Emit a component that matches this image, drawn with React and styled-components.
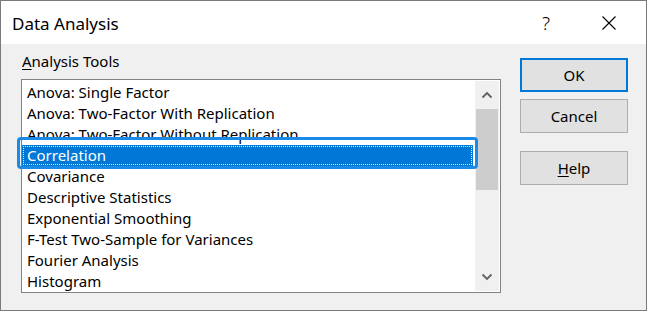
import React from "react";
import styled, { createGlobalStyle } from "styled-components";

const GlobalStyle = createGlobalStyle`
  html, body {
    margin: 0;
    padding: 0;
    background: #fff;
  }
  body {
    font-family: "Noto Sans", "Open Sans", sans-serif;
    color: #000;
  }
`;

const tools = [
  "Anova: Single Factor",
  "Anova: Two-Factor With Replication",
  "Anova: Two-Factor Without Replication",
  "Correlation",
  "Covariance",
  "Descriptive Statistics",
  "Exponential Smoothing",
  "F-Test Two-Sample for Variances",
  "Fourier Analysis",
  "Histogram",
];

const App = () => {
  return (
    <>
      <GlobalStyle />
      <Window>
        <TitleBar>
          <Title>Data Analysis</Title>
          <TitleButtons>
            <HelpGlyph>?</HelpGlyph>
            <CloseIcon viewBox="0 0 14 14">
              <path d="M0.5 0.5 L13.5 13.5 M13.5 0.5 L0.5 13.5" stroke="#000" strokeWidth="1.1" fill="none" />
            </CloseIcon>
          </TitleButtons>
        </TitleBar>
        <Body>
          <Main>
            <Label>
              <u>A</u>nalysis Tools
            </Label>
            <ListBox>
              <Rows>
                {tools.map((t, i) => (
                  <Row key={t} selected={i === 3}>
                    {t}
                    {i === 3 && <FocusRing />}
                  </Row>
                ))}
              </Rows>
              <ScrollBar>
                <Arrow viewBox="0 0 12 8">
                  <path d="M1.5 6.5 L6 2 L10.5 6.5" stroke="#606060" strokeWidth="1.8" fill="none" />
                </Arrow>
                <Track>
                  <Thumb />
                </Track>
                <Arrow viewBox="0 0 12 8">
                  <path d="M1.5 1.5 L6 6 L10.5 1.5" stroke="#606060" strokeWidth="1.8" fill="none" />
                </Arrow>
              </ScrollBar>
            </ListBox>
          </Main>
          <Buttons>
            <Button primary>OK</Button>
            <Button>Cancel</Button>
            <Spacer />
            <Button>
              <u>H</u>elp
            </Button>
          </Buttons>
        </Body>
      </Window>
    </>
  );
};

const Window = styled.div`
  width: 645px;
  height: 309px;
  border: 1px solid #7a7a7a;
  display: flex;
  flex-direction: column;
  background: #f0f0f0;
`;

const TitleBar = styled.div`
  height: 43px;
  background: #fff;
  display: flex;
  align-items: center;
  justify-content: space-between;
  padding: 0 30px 0 11px;
`;

const Title = styled.div`
  font-size: 17px;
  margin-top: 1px;
`;

const TitleButtons = styled.div`
  display: flex;
  align-items: center;
  gap: 52px;
`;

const HelpGlyph = styled.span`
  font-size: 19px;
  font-weight: 300;
`;

const CloseIcon = styled.svg`
  width: 14px;
  height: 14px;
`;

const Body = styled.div`
  flex: 1;
  display: flex;
  padding: 8px 17px 0 20px;
`;

const Main = styled.div`
  display: flex;
  flex-direction: column;
  width: 480px;
`;

const Label = styled.div`
  font-size: 15px;
  padding-left: 1px;
  height: 27px;
  line-height: 18px;
  u {
    text-decoration-thickness: 1px;
    text-underline-offset: 2px;
  }
`;

const ListBox = styled.div`
  height: 212px;
  border: 1px solid #828282;
  background: #fff;
  display: flex;
`;

const Rows = styled.div`
  flex: 1;
  padding-top: 2px;
`;

const Row = styled.div`
  position: relative;
  height: 21px;
  line-height: 20px;
  font-size: 15px;
  padding-left: 5px;
  margin-right: 2px;
  white-space: nowrap;
  background: ${(p) => (p.selected ? "#0078d7" : "transparent")};
  color: ${(p) => (p.selected ? "#fff" : "#000")};
  outline: ${(p) => (p.selected ? "1px dotted #e8f2fb" : "none")};
  outline-offset: -2px;
`;

const FocusRing = styled.span`
  position: absolute;
  left: -5px;
  right: -5px;
  top: -8px;
  bottom: -3px;
  border: 3px solid #1a8ae6;
  border-radius: 4px;
  pointer-events: none;
`;

const ScrollBar = styled.div`
  width: 24px;
  margin: 1px 1px 1px 0;
  background: #f0f0f0;
  display: flex;
  flex-direction: column;
  align-items: center;
`;

const Arrow = styled.svg`
  width: 12px;
  height: 8px;
  margin: 10px 0;
`;

const Track = styled.div`
  flex: 1;
  width: 100%;
`;

const Thumb = styled.div`
  height: 81px;
  background: #cdcdcd;
  margin: 0 1px;
`;

const Buttons = styled.div`
  display: flex;
  flex-direction: column;
  gap: 7px;
  margin-left: 19px;
  padding-top: 6px;
`;

const Spacer = styled.div`
  height: 4px;
`;

const Button = styled.button`
  width: 108px;
  height: 34px;
  font-family: "Noto Sans", "Open Sans", sans-serif;
  font-size: 15px;
  color: #000;
  background: #e1e1e1;
  border: ${(p) => (p.primary ? "2px solid #0078d7" : "1px solid #adadad")};
  padding: 0;
  u {
    text-decoration-thickness: 1px;
    text-underline-offset: 2px;
  }
`;

export default App;
